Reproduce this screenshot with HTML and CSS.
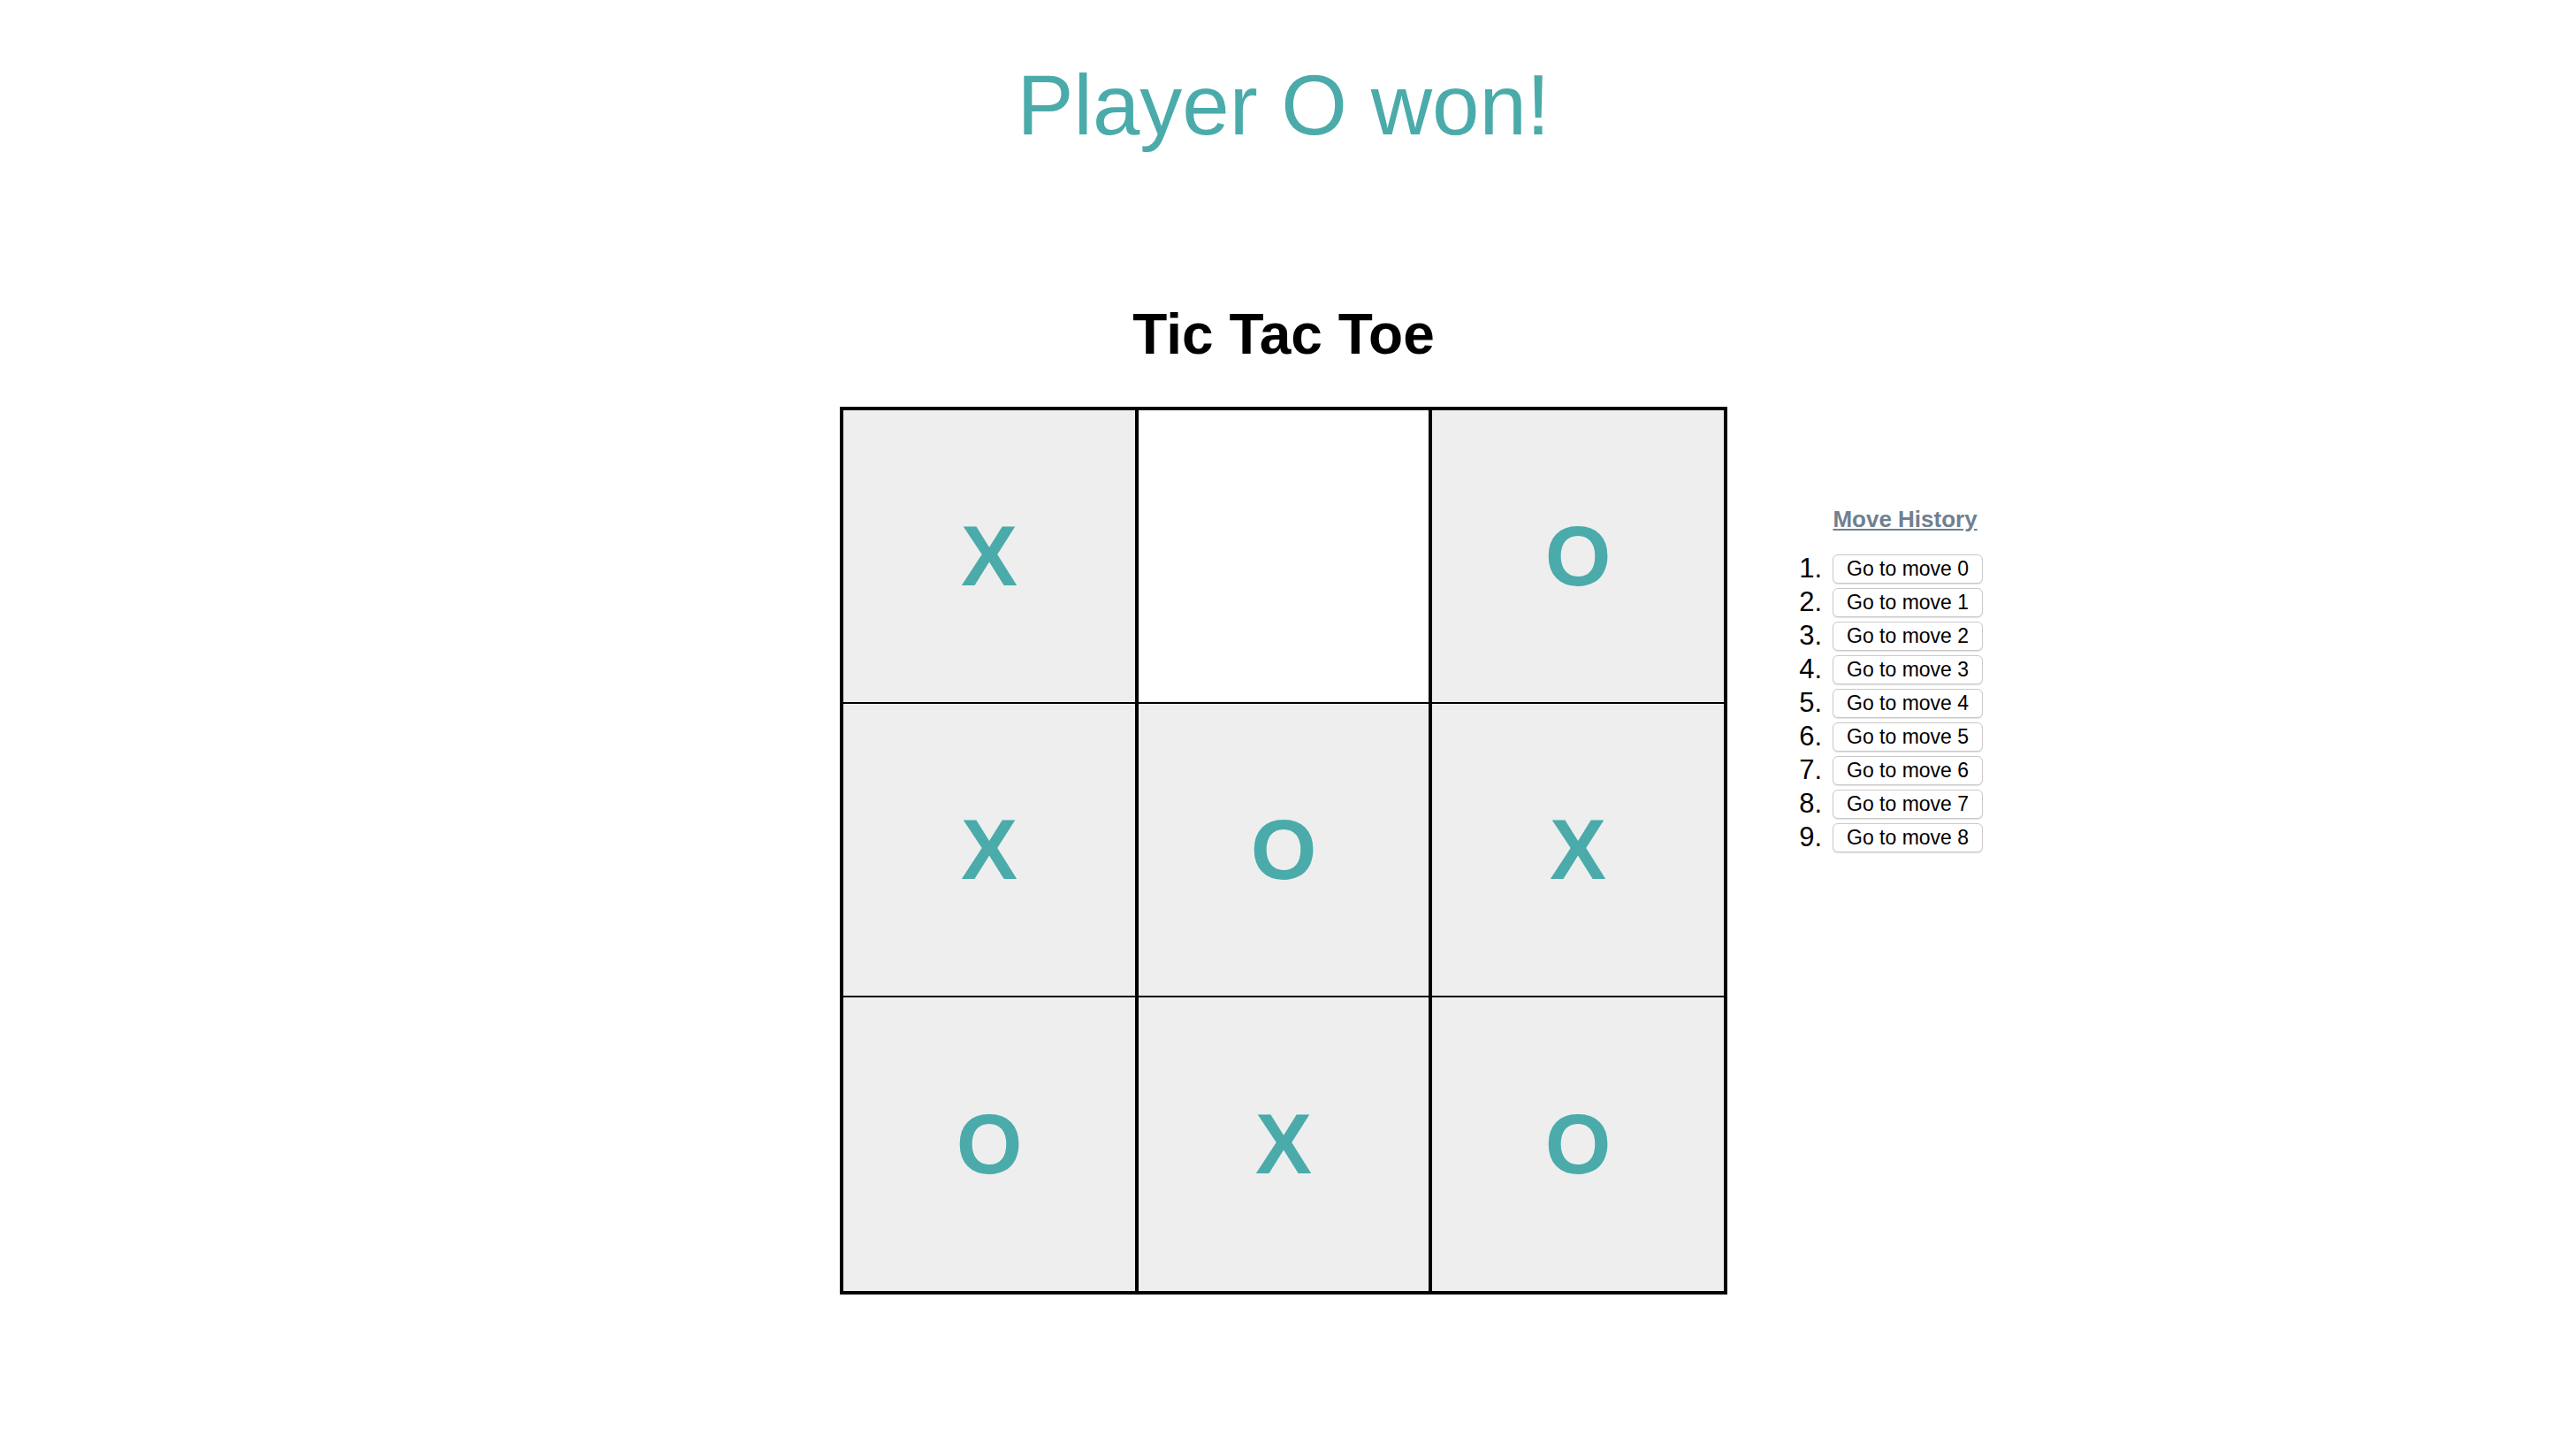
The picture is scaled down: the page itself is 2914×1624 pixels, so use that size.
FILE: index.html
```html
<!DOCTYPE html>
<html lang="en">
<head>
<meta charset="utf-8">
<title>Tic Tac Toe</title>
<link rel="stylesheet" href="styles.css">
</head>
<body>
  <h2 class="status">Player O won!</h2>
  <h1 class="title">Tic Tac Toe</h1>
  <div class="game">
    <div class="spacer"></div>
    <div class="board">
      <div class="cell">X</div>
      <div class="cell empty"></div>
      <div class="cell">O</div>
      <div class="cell">X</div>
      <div class="cell">O</div>
      <div class="cell">X</div>
      <div class="cell">O</div>
      <div class="cell">X</div>
      <div class="cell">O</div>
    </div>
    <div class="history">
      <div class="history-title">Move History</div>
      <ol class="moves">
        <li class="move"><span class="num">1.</span><button class="move-btn">Go to move 0</button></li>
        <li class="move"><span class="num">2.</span><button class="move-btn">Go to move 1</button></li>
        <li class="move"><span class="num">3.</span><button class="move-btn">Go to move 2</button></li>
        <li class="move"><span class="num">4.</span><button class="move-btn">Go to move 3</button></li>
        <li class="move"><span class="num">5.</span><button class="move-btn">Go to move 4</button></li>
        <li class="move"><span class="num">6.</span><button class="move-btn">Go to move 5</button></li>
        <li class="move"><span class="num">7.</span><button class="move-btn">Go to move 6</button></li>
        <li class="move"><span class="num">8.</span><button class="move-btn">Go to move 7</button></li>
        <li class="move"><span class="num">9.</span><button class="move-btn">Go to move 8</button></li>
      </ol>
    </div>
  </div>
</body>
</html>
```
FILE: styles.css
```css
html, body {
  margin: 0;
  background: #ffffff;
}

body {
  padding-right: 10px;
  font-family: "Liberation Sans", Arial, Helvetica, sans-serif;
  color: #000;
}

.status {
  margin: 0;
  padding-top: 64px;
  font-size: 96px;
  line-height: 110px;
  font-weight: normal;
  color: #4aabaa;
  text-align: center;
}

.title {
  margin: 167px 0 0;
  font-size: 64px;
  line-height: 74px;
  font-weight: bold;
  text-align: center;
}

.game {
  margin-top: 45px;
  display: grid;
  grid-template-columns: 1fr auto 1fr;
  align-items: start;
}

.board {
  border: 4px solid #000;
  background: #000;
  display: grid;
  grid-template-columns: 330px 328px 330px;
  grid-template-rows: 330px 330px 332px;
  column-gap: 4px;
  row-gap: 2px;
}

.cell {
  background: #eeeeee;
  display: flex;
  align-items: center;
  justify-content: center;
  font-size: 96px;
  font-weight: bold;
  color: #4aabaa;
}

.cell.empty {
  background: #ffffff;
}

.history {
  padding-left: 74px;
  padding-top: 112px;
  display: grid;
  grid-template-columns: 33px auto;
  column-gap: 12px;
  justify-content: start;
}

.history-title {
  grid-column: 2;
  margin-right: 6px;
  font-size: 26px;
  line-height: 30px;
  font-weight: bold;
  color: #708090;
  text-decoration: underline;
  text-align: center;
}

.moves {
  grid-column: 1 / 3;
  margin: 22px 0 0;
  padding: 0;
  list-style: none;
  display: grid;
  grid-template-columns: 33px auto;
  column-gap: 12px;
}

.move {
  display: contents;
}

.num {
  height: 38px;
  font-size: 31px;
  line-height: 38px;
  text-align: right;
}

.move-btn {
  justify-self: start;
  align-self: center;
  height: 33px;
  margin: 0;
  padding: 0 15px;
  font-family: "Liberation Sans", Arial, Helvetica, sans-serif;
  font-size: 23px;
  line-height: 31px;
  color: #000;
  background: #ffffff;
  border: 1px solid #c9c9c9;
  border-radius: 6px;
  box-shadow: 0 1px 1px rgba(0, 0, 0, 0.12);
}
```
